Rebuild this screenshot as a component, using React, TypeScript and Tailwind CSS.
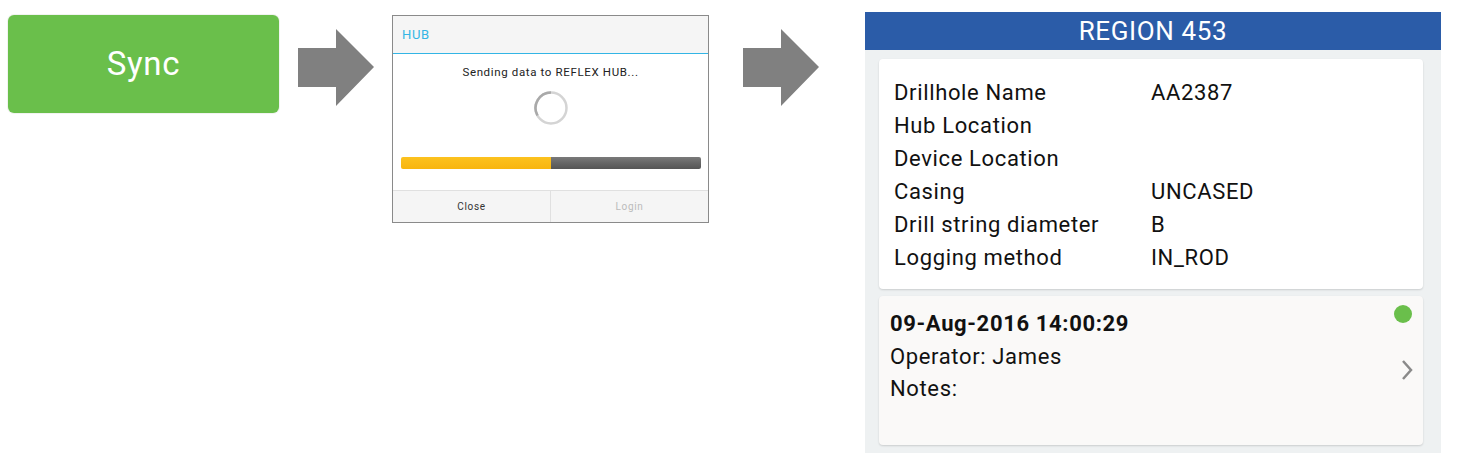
import React from "react";

function Arrow() {
  return (
    <svg width="77" height="78" viewBox="0 0 77 78" className="block">
      <polygon points="0,19 38,19 38,0 76,38 38,77 38,58 0,58" fill="#808080" />
    </svg>
  );
}

function Row({ label, value }: { label: string; value?: string }) {
  return (
    <div className="flex h-[33px] items-center">
      <div className="w-[257px]">{label}</div>
      <div>{value}</div>
    </div>
  );
}

export default function App() {
  return (
    <div
      className="w-[1461px] h-[463px] bg-white flex items-start overflow-hidden tracking-[0.04em]"
      style={{ fontFamily: "Roboto, 'Noto Sans', sans-serif" }}
    >
      {/* Sync button */}
      <div className="ml-[7px] mt-[14px] p-px rounded-[7px] bg-[#f1f3f0]">
        <div className="w-[271px] h-[98px] rounded-[6px] bg-[#6abf4b] flex items-center justify-center text-white text-[33px]">
          Sync
        </div>
      </div>

      <div className="ml-[18px] mt-[29px]">
        <Arrow />
      </div>

      {/* Dialog */}
      <div className="ml-[17px] mt-[15px] w-[317px] h-[208px] border border-[#8a8a8a] bg-white flex flex-col">
        <div className="h-[38px] bg-[#f5f5f5] border-b border-[#33b5e5] flex items-center pl-[9px] text-[13px] text-[#33b5e5]">
          HUB
        </div>
        <div className="flex-1 flex flex-col items-center">
          <div className="mt-[10px] text-[11.5px] text-[#222]">Sending data to REFLEX HUB...</div>
          <svg width="36" height="36" viewBox="0 0 36 36" className="mt-[9px]">
            <circle cx="18" cy="18" r="15.5" fill="none" stroke="#d4d4d4" strokeWidth="2.5" />
            <path d="M18 2.5 A15.5 15.5 0 0 0 4.5 25.5" fill="none" stroke="#a9a9a9" strokeWidth="2.5" />
          </svg>
          <div className="mt-[31px] w-[300px] h-[12px] rounded-[2px] overflow-hidden flex">
            <div className="w-[150px] h-full bg-gradient-to-b from-[#fcc21e] to-[#f8b50f]" />
            <div className="flex-1 h-full bg-gradient-to-b from-[#7a7a7a] via-[#666] to-[#555]" />
          </div>
        </div>
        <div className="h-[32px] border-t border-[#e0e0e0] bg-[#f5f5f5] flex text-[10px]">
          <div className="flex-1 flex items-center justify-center text-[#333] border-r border-[#e0e0e0]">Close</div>
          <div className="flex-1 flex items-center justify-center text-[#bbb]">Login</div>
        </div>
      </div>

      <div className="ml-[34px] mt-[29px]">
        <Arrow />
      </div>

      {/* Right panel */}
      <div className="ml-[45px] mt-[12px] w-[576px] h-[441px] bg-[#eef1f2] flex flex-col">
        <div className="h-[38px] bg-[#2b5ca8] text-white text-[26px] flex items-center justify-center">
          REGION 453
        </div>
        <div className="ml-[14px] mr-[18px] mt-[9px] bg-white rounded-[4px] shadow-[0_1px_2px_rgba(0,0,0,0.15)] pl-[15px] pt-[17px] pb-[15px] text-[22px] text-[#111]">
          <Row label="Drillhole Name" value="AA2387" />
          <Row label="Hub Location" />
          <Row label="Device Location" />
          <Row label="Casing" value="UNCASED" />
          <Row label="Drill string diameter" value="B" />
          <Row label="Logging method" value="IN_ROD" />
        </div>
        <div className="relative ml-[14px] mr-[18px] mt-[7px] h-[149px] bg-[#faf9f8] rounded-[4px] shadow-[0_1px_2px_rgba(0,0,0,0.15)] pl-[11px] pt-[11px] text-[22px] text-[#111]">
          <div className="h-[33px] flex items-center font-bold">09-Aug-2016 14:00:29</div>
          <div className="h-[32px] flex items-center">Operator: James</div>
          <div className="h-[33px] flex items-center">Notes:</div>
          <div className="absolute right-[11px] top-[9px] w-[18px] h-[18px] rounded-full bg-[#6abf4b]" />
          <svg className="absolute right-[10px] top-[63px]" width="12" height="22" viewBox="0 0 12 22">
            <path d="M2 2 L10 11 L2 20" fill="none" stroke="#8a8a8a" strokeWidth="2.5" />
          </svg>
        </div>
      </div>
    </div>
  );
}
